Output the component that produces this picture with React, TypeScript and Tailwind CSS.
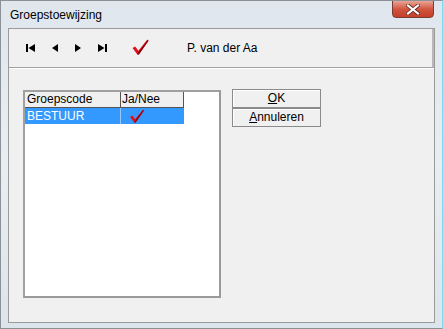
export default function App() {
  return (
    <div
      className="w-[443px] h-[329px] flex flex-col bg-gradient-to-b from-[#dfe6ee] via-[#e9eef3] to-[#dce4ec] border border-[#8c9196] border-r-[#7fd8ee] overflow-hidden"
      style={{ fontFamily: '"Liberation Sans", Arial, sans-serif' }}
    >
      {/* title bar */}
      <div className="h-[27px] flex items-start justify-between pl-[9px] pr-[8px] shrink-0">
        <span className="mt-[7px] text-[12px] leading-[14px] text-black">Groepstoewijzing</span>
        <div className="w-[42px] h-[18px] -mt-px rounded-b-[4px] border border-[#7a3b30] bg-gradient-to-b from-[#e8a597] via-[#d2553f] to-[#c4402b] flex items-center justify-center">
          <svg width="14" height="11" viewBox="0 0 14 11">
            <path d="M2 1.5 L12 9.5 M12 1.5 L2 9.5" stroke="#5a2218" strokeWidth="3.6" strokeLinecap="square" />
            <path d="M2 1.5 L12 9.5 M12 1.5 L2 9.5" stroke="#ffffff" strokeWidth="2.2" strokeLinecap="square" />
          </svg>
        </div>
      </div>

      {/* client area */}
      <div className="flex-1 flex flex-col mx-[7px] mb-[5px] border border-[#9a9a9a] bg-[#f0f0f0]">
        {/* toolbar */}
        <div className="h-[39px] shrink-0 flex items-center border-b border-r-2 border-b-[#a0a0a0] border-r-[#b8b8b8] pl-[17px]">
          <div className="flex items-center gap-[15px]">
            <svg width="10" height="8" viewBox="0 0 10 8">
              <rect x="0" y="0" width="2" height="8" fill="#000" />
              <path d="M9 0 L2.5 4 L9 8 Z" fill="#000" />
            </svg>
            <svg width="8" height="8" viewBox="0 0 8 8">
              <path d="M7 0 L1 4 L7 8 Z" fill="#000" />
            </svg>
            <svg width="8" height="8" viewBox="0 0 8 8">
              <path d="M1 0 L7 4 L1 8 Z" fill="#000" />
            </svg>
            <svg width="10" height="8" viewBox="0 0 10 8">
              <path d="M1 0 L7.5 4 L1 8 Z" fill="#000" />
              <rect x="8" y="0" width="2" height="8" fill="#000" />
            </svg>
          </div>
          <svg className="ml-[25px] -mt-[3px]" width="17" height="16" viewBox="0 0 16 15">
            <path d="M0.5 8.5 L3 7 L6 11 L14.5 0.5 L15.5 1.5 L6.5 14.5 L5 14.5 Z" fill="#e0101a" />
            <path d="M5 14.5 L6.5 14.5 L15.5 1.5 L14.8 1 L6 12.5 Z" fill="#8a0008" />
          </svg>
          <span className="ml-[38px] text-[12px] text-black">P. van der Aa</span>
        </div>

        {/* content */}
        <div className="flex-1 flex items-start pt-[21px] pl-[14px] border-t border-white">
          <div className="w-[198px] h-[208px] bg-white border-2 border-[#a0a0a0] border-r-[#9a9a9a] border-b-[#9a9a9a] flex flex-col">
            <div className="flex h-[16px] text-[12px] text-black leading-[15px]">
              <div className="w-[96px] bg-[#f0f0f0] border-r border-b border-[#555] pl-[2px]">Groepscode</div>
              <div className="w-[63px] bg-[#f0f0f0] border-r border-b border-[#555] pl-[1px]">Ja/Nee</div>
            </div>
            <div className="flex h-[16px] text-[12px] leading-[16px]">
              <div className="w-[96px] bg-[#3399ff] text-white pl-[2px] border-r border-[#9ac7f5]">BESTUUR</div>
              <div className="w-[63px] bg-[#3399ff] flex items-start pl-[8px] pt-[1px]">
                <svg width="16" height="14" viewBox="0 0 16 15">
                  <path d="M0.5 8.5 L3 7 L6 11 L14.5 0.5 L15.5 1.5 L6.5 14.5 L5 14.5 Z" fill="#e0101a" />
                  <path d="M5 14.5 L6.5 14.5 L15.5 1.5 L14.8 1 L6 12.5 Z" fill="#8a0008" />
                </svg>
              </div>
            </div>
          </div>

          <div className="ml-[11px] -mt-[1px] w-[89px] flex flex-col">
            <button className="h-[19px] border border-[#8a8a8a] bg-[#f0f0f0] text-[12px] leading-[17px] text-black shadow-[inset_1px_1px_0_#fff]">
              <span className="underline">O</span>K
            </button>
            <button className="h-[19px] border border-[#8a8a8a] bg-[#f0f0f0] text-[12px] leading-[17px] text-black shadow-[inset_1px_1px_0_#fff]">
              <span className="underline">A</span>nnuleren
            </button>
          </div>
        </div>
      </div>
    </div>
  );
}
